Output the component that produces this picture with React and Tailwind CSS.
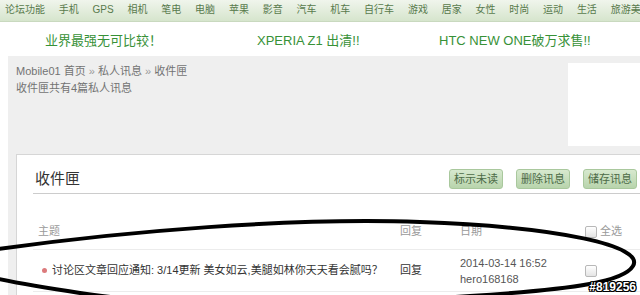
import React from 'react';

const navItems = [
  '论坛功能', '手机', 'GPS', '相机', '笔电', '电脑', '苹果', '影音', '汽车',
  '机车', '自行车', '游戏', '居家', '女性', '时尚', '运动', '生活', '旅游美食',
];

const font = { fontFamily: '"Liberation Sans", Arial, "Noto Sans CJK SC", sans-serif' };

const Checkbox = () => (
  <span className="inline-block w-[12px] h-[12px] rounded-[2px] border border-[#b8b8b8] bg-gradient-to-b from-[#ffffff] to-[#e4e4e4]" />
);

const GreenButton = ({ children }) => (
  <button className="h-[20px] px-[4px] rounded-[3px] border border-[#a9c89d] bg-gradient-to-b from-[#d7e9cf] to-[#b8d4ac] text-[11px] leading-[18px] text-[#4d6b47]">
    {children}
  </button>
);

export default function App() {
  return (
    <div style={font} className="relative w-[640px] h-[295px] overflow-hidden bg-white">
      {/* top nav */}
      <div className="h-[22px] flex gap-[13.8px] pl-[5px] whitespace-nowrap border-b border-[#c9d9bf] bg-gradient-to-b from-[#f0f5ec] to-[#d6e5cd] text-[10px] leading-[20px] text-[#587a4c]">
        {navItems.map((item) => (
          <span key={item} className="shrink-0">{item}</span>
        ))}
      </div>

      {/* promo links */}
      <div className="h-[34px] pt-[11px] pl-[45px] flex text-[13px] leading-[16px] text-[#379137] whitespace-nowrap">
        <span className="w-[212px] shrink-0">业界最强无可比较！</span>
        <span className="w-[182px] shrink-0">XPERIA Z1 出清!!</span>
        <span className="shrink-0">HTC NEW ONE破万求售!!</span>
      </div>

      {/* gray content area */}
      <div className="ml-[8px] w-[700px] bg-[#efefef] pt-[7px] pl-[8px]">
        <div className="flex">
          <div className="w-[552px] text-[11px] leading-[17px] text-[#737373]">
            <div>Mobile01 首页 <span className="text-[#999]">»</span> 私人讯息 <span className="text-[#999]">»</span> 收件匣</div>
            <div>收件匣共有4篇私人讯息</div>
          </div>
          <div className="w-[120px] h-[83px] bg-white" />
        </div>

        {/* inbox card */}
        <div className="mt-[8px] h-[160px] bg-white border border-[#d6d6d6] pl-[16px]">
          <div className="h-[39px] flex items-end pb-[4px] border-b border-[#cccccc]">
            <div className="pl-[2px] text-[15px] leading-[20px] text-[#333]">收件匣</div>
            <div className="ml-[369px] flex gap-[13px]">
              <GreenButton>标示未读</GreenButton>
              <GreenButton>删除讯息</GreenButton>
              <GreenButton>储存讯息</GreenButton>
            </div>
          </div>

          <div className="grid grid-cols-[367px_60px_125px_1fr] h-[56px] items-end pb-[11px] border-b border-[#ececec] text-[11px] leading-[13px] text-[#9a9a9a]">
            <div className="pl-[5px]">主题</div>
            <div>回复</div>
            <div>日期</div>
            <div className="flex items-center gap-[3px]">
              <Checkbox />
              <span>全选</span>
            </div>
          </div>

          <div className="grid grid-cols-[367px_60px_125px_1fr] h-[42px] items-center border-b border-[#ececec] text-[11px] text-[#333]">
            <div className="flex items-center pl-[9px] whitespace-nowrap">
              <span className="w-[5px] h-[5px] rounded-full bg-[#dc7a7c]" />
              <span className="ml-[5px]">讨论区文章回应通知: 3/14更新 美女如云,美腿如林你天天看会腻吗？</span>
            </div>
            <div>回复</div>
            <div className="leading-[16px] text-[#555]">
              <div>2014-03-14 16:52</div>
              <div>hero168168</div>
            </div>
            <div className="flex items-center">
              <Checkbox />
            </div>
          </div>
        </div>
      </div>

      {/* hand-drawn annotation */}
      <svg className="absolute inset-0 pointer-events-none" width="640" height="295" viewBox="0 0 640 295">
        <path
          d="M -15 251 C 120 231, 300 217, 420 222 C 560 227, 645 246, 633 266 C 624 281, 580 289, 470 296 C 330 306, 150 305, 80 293 C 40 287, 10 282, -15 276"
          fill="none"
          stroke="#000"
          strokeWidth="4"
          strokeLinecap="round"
        />
      </svg>

      <div className="absolute right-[4px] bottom-[1px] text-[12px] font-bold leading-[14px] text-white [text-shadow:1px_1px_0_#000,-1px_-1px_0_#000,1px_-1px_0_#000,-1px_1px_0_#000,0_1px_0_#000,1px_0_0_#000,0_-1px_0_#000,-1px_0_0_#000]">
        #819256
      </div>
    </div>
  );
}
